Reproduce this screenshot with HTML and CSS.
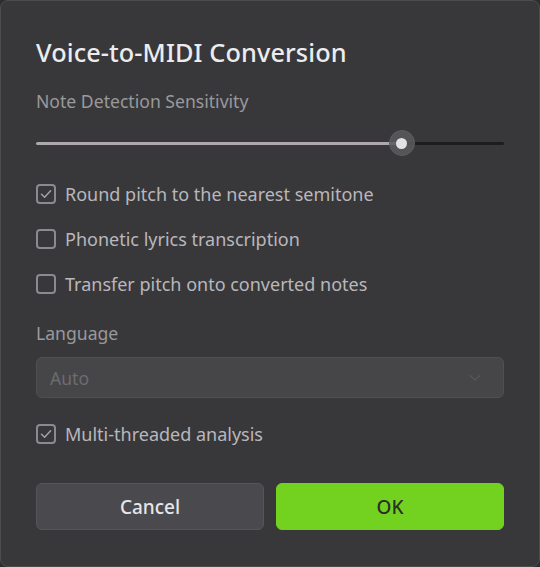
FILE: index.html
```html
<!DOCTYPE html>
<html>
<head>
<meta charset="utf-8">
<link rel="stylesheet" href="styles.css">
</head>
<body>
<div class="dialog">
  <h1 class="title">Voice-to-MIDI Conversion</h1>
  <div class="label label-sens">Note Detection Sensitivity</div>
  <div class="slider">
    <div class="track"><div class="fill"></div></div>
    <div class="thumb"><div class="dot"></div></div>
  </div>
  <div class="checks">
    <label class="check"><span class="box"><svg viewBox="0 0 20 20" width="20" height="20"><polyline points="5.5,10.2 8.6,13.2 14.6,6.8" fill="none" stroke="#a4a2a8" stroke-width="1.5" stroke-linecap="round" stroke-linejoin="round"/></svg></span><span class="ctext">Round pitch to the nearest semitone</span></label>
    <label class="check"><span class="box"></span><span class="ctext">Phonetic lyrics transcription</span></label>
    <label class="check"><span class="box"></span><span class="ctext">Transfer pitch onto converted notes</span></label>
  </div>
  <div class="label label-lang">Language</div>
  <div class="select">
    <span class="sel-text">Auto</span>
    <svg class="chev" viewBox="0 0 12 8" width="12" height="8"><polyline points="1,1.5 6,6 11,1.5" fill="none" stroke="#58585c" stroke-width="1.3"/></svg>
  </div>
  <label class="check check-multi"><span class="box"><svg viewBox="0 0 20 20" width="20" height="20"><polyline points="5.5,10.2 8.6,13.2 14.6,6.8" fill="none" stroke="#a4a2a8" stroke-width="1.5" stroke-linecap="round" stroke-linejoin="round"/></svg></span><span class="ctext">Multi-threaded analysis</span></label>
  <div class="buttons">
    <button class="btn btn-cancel">Cancel</button>
    <button class="btn btn-ok">OK</button>
  </div>
</div>
</body>
</html>
```
FILE: styles.css
```css
* { box-sizing: border-box; }
html, body {
  margin: 0;
  padding: 0;
  background: #2e2e30;
}
body {
  width: 540px;
  height: 567px;
  font-family: "Noto Sans", "Open Sans", sans-serif;
}
.dialog {
  width: 540px;
  height: 567px;
  background: #38383a;
  border: 1px solid #4c4c4f;
  border-radius: 8px;
  padding: 35px 35px 0 35px;
  display: flex;
  flex-direction: column;
}
.title {
  margin: 0;
  font-size: 25.3px;
  line-height: 32px;
  font-weight: 500;
  color: #ececef;
  letter-spacing: 0.1px;
}
.label {
  font-size: 17.6px;
  line-height: 24px;
  color: #9a999d;
}
.label-sens { margin-top: 21px; }
.label-lang { margin-top: 23px; }
.slider {
  position: relative;
  height: 28px;
  margin-top: 16px;
  display: flex;
  align-items: center;
}
.track {
  width: 100%;
  height: 3px;
  background: #1d1d1f;
  border-radius: 2px;
}
.fill {
  width: 78.2%;
  height: 100%;
  background: #aea8ae;
  border-radius: 2px;
}
.thumb {
  position: absolute;
  left: calc(78.2% - 13px);
  top: 1px;
  width: 26px;
  height: 26px;
  border-radius: 50%;
  background: rgba(90, 90, 94, 0.85);
  border: 1px solid #5e5e62;
  display: flex;
  align-items: center;
  justify-content: center;
}
.dot {
  width: 11px;
  height: 11px;
  border-radius: 50%;
  background: #e2e2e4;
}
.checks {
  margin-top: 23px;
  display: flex;
  flex-direction: column;
  gap: 17px;
}
.check {
  display: flex;
  align-items: center;
  height: 28px;
  gap: 9px;
}
.box {
  width: 20px;
  height: 20px;
  border: 2px solid #8c8a90;
  border-radius: 4px;
  display: flex;
  align-items: center;
  justify-content: center;
  flex: none;
}
.box svg {
  display: block;
  flex: none;
  margin: -2px;
}
.ctext {
  font-size: 18px;
  color: #b9b7bc;
}
.select {
  margin-top: 12px;
  height: 41px;
  background: #464648;
  border: 1px solid #505053;
  border-radius: 6px;
  display: flex;
  align-items: center;
  justify-content: space-between;
  padding: 0 22px 0 13px;
}
.sel-text {
  font-size: 17.6px;
  color: #6c6b70;
}
.chev { display: block; }
.check-multi { margin-top: 22px; }
.buttons {
  margin-top: 35px;
  display: flex;
  gap: 12px;
}
.btn {
  flex: 1;
  height: 47px;
  border-radius: 6px;
  font-family: "Noto Sans", "Open Sans", sans-serif;
  font-size: 19px;
  font-weight: 500;
}
.btn-cancel {
  background: #4a4a4e;
  border: 1px solid #56565a;
  color: #e6e6e8;
}
.btn-ok {
  background: #72d21f;
  border: 1px solid #72d21f;
  color: #2b2f2a;
}
```
